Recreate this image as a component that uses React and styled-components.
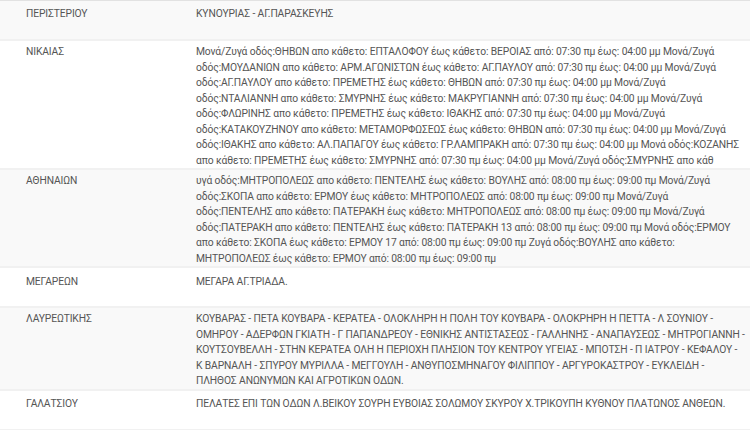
import React from "react";
import styled, { createGlobalStyle } from "styled-components";

const Global = createGlobalStyle`
  html, body { margin: 0; padding: 0; background: #ffffff; }
  body { font-family: Roboto, "Noto Sans", sans-serif; }
`;

const Table = styled.div`
  width: 750px;
  border-top: 1px solid #e2e2e2;
  font-family: Roboto, "Noto Sans", sans-serif;
  font-size: 10.3px;
  letter-spacing: -0.12px;
  line-height: 15.5px;
  color: #555555;
`;

const Row = styled.div`
  display: grid;
  grid-template-columns: 170px 1fr;
  min-height: 40px;
  box-sizing: border-box;
  padding: ${(p) => p.$pt || 2}px 4px 0 26px;
  background: ${(p) => (p.$striped ? "#f9f9f9" : "#ffffff")};
  border-bottom: 2px solid #f1f1f1;
`;

const Area = styled.div`
  white-space: nowrap;
`;

const Desc = styled.div`
  word-wrap: break-word;
`;

const rows = [
  {
    area: "ΠΕΡΙΣΤΕΡΙΟΥ",
    desc: "ΚΥΝΟΥΡΙΑΣ - ΑΓ.ΠΑΡΑΣΚΕΥΗΣ",
    striped: true,
    pt: 5,
  },
  {
    area: "ΝΙΚΑΙΑΣ",
    desc:
      "Μονά/Ζυγά οδός:ΘΗΒΩΝ απο κάθετο: ΕΠΤΑΛΟΦΟΥ έως κάθετο: ΒΕΡΟΙΑΣ από: 07:30 πμ έως: 04:00 μμ Μονά/Ζυγά οδός:ΜΟΥΔΑΝΙΩΝ απο κάθετο: ΑΡΜ.ΑΓΩΝΙΣΤΩΝ έως κάθετο: ΑΓ.ΠΑΥΛΟΥ από: 07:30 πμ έως: 04:00 μμ Μονά/Ζυγά οδός:ΑΓ.ΠΑΥΛΟΥ απο κάθετο: ΠΡΕΜΕΤΗΣ έως κάθετο: ΘΗΒΩΝ από: 07:30 πμ έως: 04:00 μμ Μονά/Ζυγά οδός:ΝΤΑΛΙΑΝΝΗ απο κάθετο: ΣΜΥΡΝΗΣ έως κάθετο: ΜΑΚΡΥΓΙΑΝΝΗ από: 07:30 πμ έως: 04:00 μμ Μονά/Ζυγά οδός:ΦΛΩΡΙΝΗΣ απο κάθετο: ΠΡΕΜΕΤΗΣ έως κάθετο: ΙΘΑΚΗΣ από: 07:30 πμ έως: 04:00 μμ Μονά/Ζυγά οδός:ΚΑΤΑΚΟΥΖΗΝΟΥ απο κάθετο: ΜΕΤΑΜΟΡΦΩΣΕΩΣ έως κάθετο: ΘΗΒΩΝ από: 07:30 πμ έως: 04:00 μμ Μονά/Ζυγά οδός:ΙΘΑΚΗΣ απο κάθετο: ΑΛ.ΠΑΠΑΓΟΥ έως κάθετο: ΓΡ.ΛΑΜΠΡΑΚΗ από: 07:30 πμ έως: 04:00 μμ Μονά οδός:ΚΟΖΑΝΗΣ απο κάθετο: ΠΡΕΜΕΤΗΣ έως κάθετο: ΣΜΥΡΝΗΣ από: 07:30 πμ έως: 04:00 μμ Μονά/Ζυγά οδός:ΣΜΥΡΝΗΣ απο κάθ",
    striped: false,
    pt: 3,
  },
  {
    area: "ΑΘΗΝΑΙΩΝ",
    desc:
      "υγά οδός:ΜΗΤΡΟΠΟΛΕΩΣ απο κάθετο: ΠΕΝΤΕΛΗΣ έως κάθετο: ΒΟΥΛΗΣ από: 08:00 πμ έως: 09:00 πμ Μονά/Ζυγά οδός:ΣΚΟΠΑ απο κάθετο: ΕΡΜΟΥ έως κάθετο: ΜΗΤΡΟΠΟΛΕΩΣ από: 08:00 πμ έως: 09:00 πμ Μονά/Ζυγά οδός:ΠΕΝΤΕΛΗΣ απο κάθετο: ΠΑΤΕΡΑΚΗ έως κάθετο: ΜΗΤΡΟΠΟΛΕΩΣ από: 08:00 πμ έως: 09:00 πμ Μονά/Ζυγά οδός:ΠΑΤΕΡΑΚΗ απο κάθετο: ΠΕΝΤΕΛΗΣ έως κάθετο: ΠΑΤΕΡΑΚΗ 13 από: 08:00 πμ έως: 09:00 πμ Μονά οδός:ΕΡΜΟΥ απο κάθετο: ΣΚΟΠΑ έως κάθετο: ΕΡΜΟΥ 17 από: 08:00 πμ έως: 09:00 πμ Ζυγά οδός:ΒΟΥΛΗΣ απο κάθετο: ΜΗΤΡΟΠΟΛΕΩΣ έως κάθετο: ΕΡΜΟΥ από: 08:00 πμ έως: 09:00 πμ",
    striped: true,
    pt: 3,
  },
  {
    area: "ΜΕΓΑΡΕΩΝ",
    desc: "ΜΕΓΑΡΑ ΑΓ.ΤΡΙΑΔΑ.",
    striped: false,
    pt: 6,
  },
  {
    area: "ΛΑΥΡΕΩΤΙΚΗΣ",
    desc:
      "ΚΟΥΒΑΡΑΣ - ΠΕΤΑ ΚΟΥΒΑΡΑ - ΚΕΡΑΤΕΑ - ΟΛΟΚΛΗΡΗ Η ΠΟΛΗ ΤΟΥ ΚΟΥΒΑΡΑ - ΟΛΟΚΡΗΡΗ Η ΠΕΤΤΑ - Λ ΣΟΥΝΙΟΥ - ΟΜΗΡΟΥ - ΑΔΕΡΦΩΝ ΓΚΙΑΤΗ - Γ ΠΑΠΑΝΔΡΕΟΥ - ΕΘΝΙΚΗΣ ΑΝΤΙΣΤΑΣΕΩΣ - ΓΑΛΛΗΝΗΣ - ΑΝΑΠΑΥΣΕΩΣ - ΜΗΤΡΟΓΙΑΝΝΗ - ΚΟΥΤΣΟΥΒΕΛΛΗ - ΣΤΗΝ ΚΕΡΑΤΕΑ ΟΛΗ Η ΠΕΡΙΟΧΗ ΠΛΗΣΙΟΝ ΤΟΥ ΚΕΝΤΡΟΥ ΥΓΕΙΑΣ - ΜΠΟΤΣΗ - Π ΙΑΤΡΟΥ - ΚΕΦΑΛΟΥ - Κ ΒΑΡΝΑΛΗ - ΣΠΥΡΟΥ ΜΥΡΙΛΛΑ - ΜΕΓΓΟΥΛΗ - ΑΝΘΥΠΟΣΜΗΝΑΓΟΥ ΦΙΛΙΠΠΟΥ - ΑΡΓΥΡΟΚΑΣΤΡΟΥ - ΕΥΚΛΕΙΔΗ - ΠΛΗΘΟΣ ΑΝΩΝΥΜΩΝ ΚΑΙ ΑΓΡΟΤΙΚΩΝ ΟΔΩΝ.",
    striped: true,
    pt: 3,
  },
  {
    area: "ΓΑΛΑΤΣΙΟΥ",
    desc:
      "ΠΕΛΑΤΕΣ ΕΠΙ ΤΩΝ ΟΔΩΝ Λ.ΒΕΙΚΟΥ ΣΟΥΡΗ ΕΥΒΟΙΑΣ ΣΟΛΩΜΟΥ ΣΚΥΡΟΥ Χ.ΤΡΙΚΟΥΠΗ ΚΥΘΝΟΥ ΠΛΑΤΩΝΟΣ ΑΝΘΕΩΝ.",
    striped: false,
    pt: 5,
  },
];

export default function App() {
  return (
    <>
      <Global />
      <Table>
        {rows.map((r) => (
          <Row key={r.area} $striped={r.striped} $pt={r.pt}>
            <Area>{r.area}</Area>
            <Desc>{r.desc}</Desc>
          </Row>
        ))}
      </Table>
    </>
  );
}
